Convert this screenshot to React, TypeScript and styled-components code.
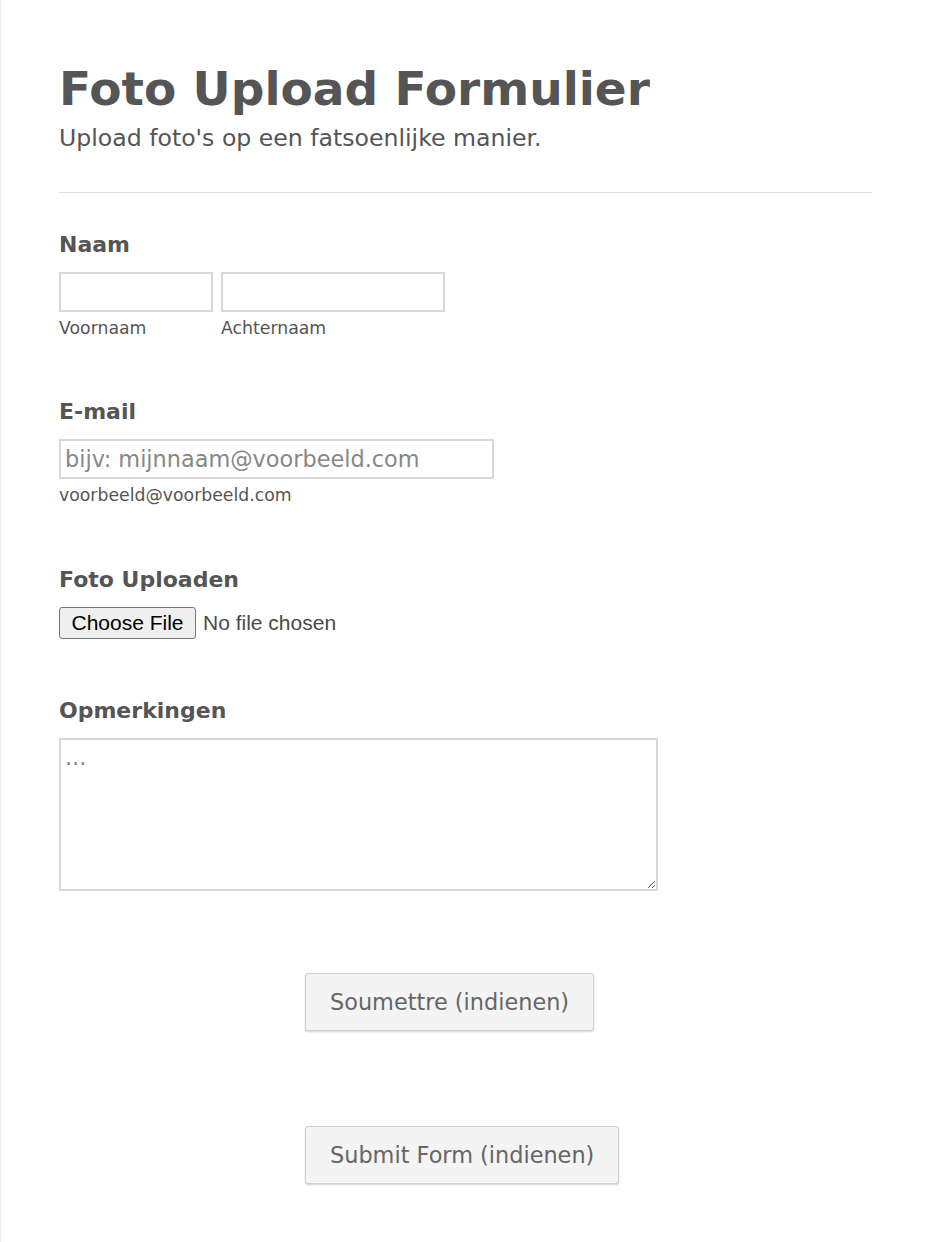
import React from 'react';
import styled, { createGlobalStyle } from 'styled-components';

const GlobalStyle = createGlobalStyle`
  html, body {
    margin: 0;
    padding: 0;
    background: #ffffff;
  }
  body {
    font-family: 'DejaVu Sans', Verdana, sans-serif;
    color: #555555;
  }
`;

const Page = styled.div`
  min-height: 1242px;
  box-sizing: border-box;
  border-left: 1px solid #eeeeee;
  padding: 62px 58px 40px 58px;
`;

const Header = styled.header`
  padding-bottom: 40px;
  border-bottom: 1px solid #dedede;
`;

const Title = styled.h1`
  margin: 0;
  font-size: 47px;
  font-weight: 700;
  line-height: 54px;
  color: #555555;
`;

const Subtitle = styled.p`
  margin: 8px 0 0;
  font-size: 23.6px;
  line-height: 28px;
`;

const Form = styled.form`
  display: flex;
  flex-direction: column;
  padding-top: 39px;
`;

const Field = styled.div<{ $after: number }>`
  display: flex;
  flex-direction: column;
  gap: 14px;
  margin-bottom: ${(p) => p.$after}px;
`;

const Label = styled.label`
  font-size: 22px;
  font-weight: 700;
  line-height: 26px;
`;

const Row = styled.div`
  display: flex;
  gap: 8px;
`;

const SubField = styled.div`
  display: flex;
  flex-direction: column;
  gap: 6px;
`;

const TextInput = styled.input<{ $width: number }>`
  box-sizing: border-box;
  width: ${(p) => p.$width}px;
  height: 40px;
  padding: 0 4px;
  border: 2px solid #d8d8d8;
  border-radius: 0;
  font-family: 'DejaVu Sans', Verdana, sans-serif;
  font-size: 22.4px;
  color: #555555;
  outline: none;

  &::placeholder {
    color: #878787;
  }
`;

const Hint = styled.span`
  font-size: 17.3px;
  line-height: 20px;
`;

const FileRow = styled.div`
  display: flex;
  align-items: center;
  gap: 7px;
  height: 32px;
  font-family: 'Liberation Sans', Arial, sans-serif;
  font-size: 21px;
`;

const FileButton = styled.button`
  box-sizing: border-box;
  width: 137px;
  height: 32px;
  padding: 0;
  border: 1px solid #767676;
  border-radius: 3px;
  background: #efefef;
  font-family: 'Liberation Sans', Arial, sans-serif;
  font-size: 21px;
  color: #000000;
`;

const FileStatus = styled.span`
  color: #4a4a4a;
`;

const TextArea = styled.textarea`
  box-sizing: border-box;
  width: 599px;
  height: 153px;
  padding: 4px 4px;
  border: 2px solid #d8d8d8;
  font-family: 'DejaVu Sans', Verdana, sans-serif;
  font-size: 22.4px;
  color: #555555;
  resize: both;
  outline: none;

  &::placeholder {
    color: #878787;
  }
`;

const Actions = styled.div`
  display: flex;
  flex-direction: column;
  align-items: flex-start;
  gap: 95px;
  padding-left: 246px;
`;

const SubmitButton = styled.button`
  box-sizing: border-box;
  height: 58px;
  padding: 0 24px;
  border: 1px solid #cfcfcf;
  border-radius: 3px;
  background: #f4f4f4;
  box-shadow: 0 1px 2px rgba(0, 0, 0, 0.18);
  font-family: 'DejaVu Sans', Verdana, sans-serif;
  font-size: 22.4px;
  color: #666666;
`;

export default function App() {
  return (
    <>
      <GlobalStyle />
      <Page>
        <Header>
          <Title>Foto Upload Formulier</Title>
          <Subtitle>Upload foto's op een fatsoenlijke manier.</Subtitle>
        </Header>
        <Form onSubmit={(e) => e.preventDefault()}>
          <Field $after={61}>
            <Label>Naam</Label>
            <Row>
              <SubField>
                <TextInput $width={154} type="text" />
                <Hint>Voornaam</Hint>
              </SubField>
              <SubField>
                <TextInput $width={224} type="text" />
                <Hint>Achternaam</Hint>
              </SubField>
            </Row>
          </Field>
          <Field $after={62}>
            <Label>E-mail</Label>
            <SubField>
              <TextInput $width={435} type="email" placeholder="bijv: mijnnaam@voorbeeld.com" />
              <Hint>voorbeeld@voorbeeld.com</Hint>
            </SubField>
          </Field>
          <Field $after={59}>
            <Label>Foto Uploaden</Label>
            <FileRow>
              <FileButton type="button">Choose File</FileButton>
              <FileStatus>No file chosen</FileStatus>
            </FileRow>
          </Field>
          <Field $after={82}>
            <Label>Opmerkingen</Label>
            <TextArea placeholder="..." />
          </Field>
          <Actions>
            <SubmitButton type="submit">Soumettre (indienen)</SubmitButton>
            <SubmitButton type="submit">Submit Form (indienen)</SubmitButton>
          </Actions>
        </Form>
      </Page>
    </>
  );
}
